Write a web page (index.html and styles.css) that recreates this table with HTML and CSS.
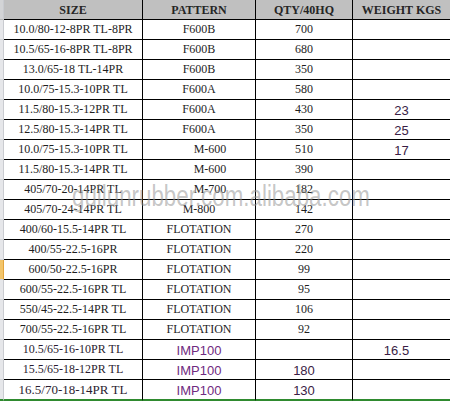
FILE: index.html
```html
<!DOCTYPE html>
<html>
<head>
<meta charset="utf-8">
<link rel="stylesheet" href="styles.css">
</head>
<body>
<div class="sheet">
<table class="grid">
  <colgroup>
    <col class="c-rh"><col class="c-size"><col class="c-pat"><col class="c-qty"><col class="c-wt">
  </colgroup>
  <thead>
    <tr class="head"><th class="rh rh-head"></th><th>SIZE</th><th>PATTERN</th><th>QTY/40HQ</th><th>WEIGHT KGS</th></tr>
  </thead>
  <tbody>
    <tr><td class="rh"></td><td>10.0/80-12-8PR TL-8PR</td><td>F600B</td><td>700</td><td></td></tr>
    <tr><td class="rh"></td><td>10.5/65-16-8PR TL-8PR</td><td>F600B</td><td>680</td><td></td></tr>
    <tr><td class="rh"></td><td>13.0/65-18 TL-14PR</td><td>F600B</td><td>350</td><td></td></tr>
    <tr><td class="rh"></td><td>10.0/75-15.3-10PR TL</td><td>F600A</td><td>580</td><td></td></tr>
    <tr><td class="rh"></td><td>11.5/80-15.3-12PR TL</td><td>F600A</td><td>430</td><td class="sans">23</td></tr>
    <tr><td class="rh"></td><td>12.5/80-15.3-14PR TL</td><td>F600A</td><td>350</td><td class="sans">25</td></tr>
    <tr><td class="rh"></td><td>10.0/75-15.3-10PR TL</td><td class="shift">M-600</td><td>510</td><td class="sans">17</td></tr>
    <tr><td class="rh"></td><td>11.5/80-15.3-14PR TL</td><td class="shift">M-600</td><td>390</td><td></td></tr>
    <tr><td class="rh"></td><td>405/70-20-14PR TL</td><td class="shift">M-700</td><td>182</td><td></td></tr>
    <tr><td class="rh"></td><td>405/70-24-14PR TL</td><td>M-800</td><td>142</td><td></td></tr>
    <tr><td class="rh"></td><td>400/60-15.5-14PR TL</td><td>FLOTATION</td><td>270</td><td></td></tr>
    <tr><td class="rh"></td><td>400/55-22.5-16PR</td><td>FLOTATION</td><td>220</td><td></td></tr>
    <tr><td class="rh rh-active"></td><td>600/50-22.5-16PR</td><td>FLOTATION</td><td>99</td><td></td></tr>
    <tr><td class="rh"></td><td>600/55-22.5-16PR TL</td><td>FLOTATION</td><td>95</td><td></td></tr>
    <tr><td class="rh"></td><td>550/45-22.5-14PR TL</td><td>FLOTATION</td><td>106</td><td></td></tr>
    <tr><td class="rh"></td><td>700/55-22.5-16PR TL</td><td>FLOTATION</td><td>92</td><td></td></tr>
    <tr><td class="rh"></td><td class="tint">10.5/65-16-10PR TL</td><td class="sans imp">IMP100</td><td></td><td class="sans left">16.5</td></tr>
    <tr><td class="rh"></td><td class="tint">15.5/65-18-12PR TL</td><td class="sans imp">IMP100</td><td class="sans">180</td><td></td></tr>
    <tr class="last"><td class="rh"></td><td class="tint big">16.5/70-18-14PR TL</td><td class="sans imp">IMP100</td><td class="sans">130</td><td></td></tr>
  </tbody>
</table>
<div class="watermark">guilunrubber.com.alibaba.com</div>
</div>
</body>
</html>
```

FILE: styles.css
```css
html, body {
  margin: 0;
  padding: 0;
  background: #ffffff;
  overflow: hidden;
}

.sheet {
  position: relative;
  width: 451px;
}

.grid {
  border-collapse: separate;
  border-spacing: 0;
  table-layout: fixed;
  width: 451px;
  font-family: "Liberation Serif", "Times New Roman", serif;
  font-size: 12px;
  color: #1e1e1e;
}

.c-rh { width: 4px; }
.c-size { width: 139px; }
.c-pat { width: 113px; }
.c-qty { width: 97px; }
.c-wt { width: 98px; }

.grid th,
.grid td {
  box-sizing: border-box;
  padding: 0;
  line-height: 19px;
  text-align: center;
  white-space: nowrap;
  overflow: hidden;
  border-right: 1px solid #000;
  border-bottom: 1px solid #000;
  vertical-align: middle;
}

.grid th {
  background: #c0c0c0;
  font-weight: bold;
  color: #262626;
  padding-top: 2px;
  line-height: 17px;
}

.grid .rh {
  background: #e6e7ea;
  border-right: 1px solid #c9cbd0;
  border-bottom: 1px solid #d0d2d6;
}

.grid .rh-head {
  background: #d3d4d6;
  border-bottom: 1px solid #b5b5b5;
}

.grid .rh-active {
  background: #f3c56a;
  border-right: 1px solid #e3a43c;
}

.grid .sans {
  font-family: "Liberation Sans", Arial, sans-serif;
  font-size: 13px;
  color: #3a1d45;
  line-height: 15px;
  vertical-align: bottom;
  padding-bottom: 1px;
}

.grid .imp {
  color: #6f2a7f;
}

.grid .shift {
  padding-left: 22px;
}

.grid .left {
  padding-right: 10px;
}

.grid .tint {
  color: #2a1c30;
}

.grid .big {
  font-size: 13px;
}

.grid tr.last td {
  border-bottom: 2px solid #2f8a2f;
}

.watermark {
  position: absolute;
  left: 72px;
  top: 182px;
  font-family: "Liberation Sans", Arial, sans-serif;
  font-size: 29px;
  line-height: 29px;
  color: rgba(150, 150, 150, 0.55);
  white-space: nowrap;
  transform: scaleX(0.77);
  transform-origin: left top;
  pointer-events: none;
}
```
